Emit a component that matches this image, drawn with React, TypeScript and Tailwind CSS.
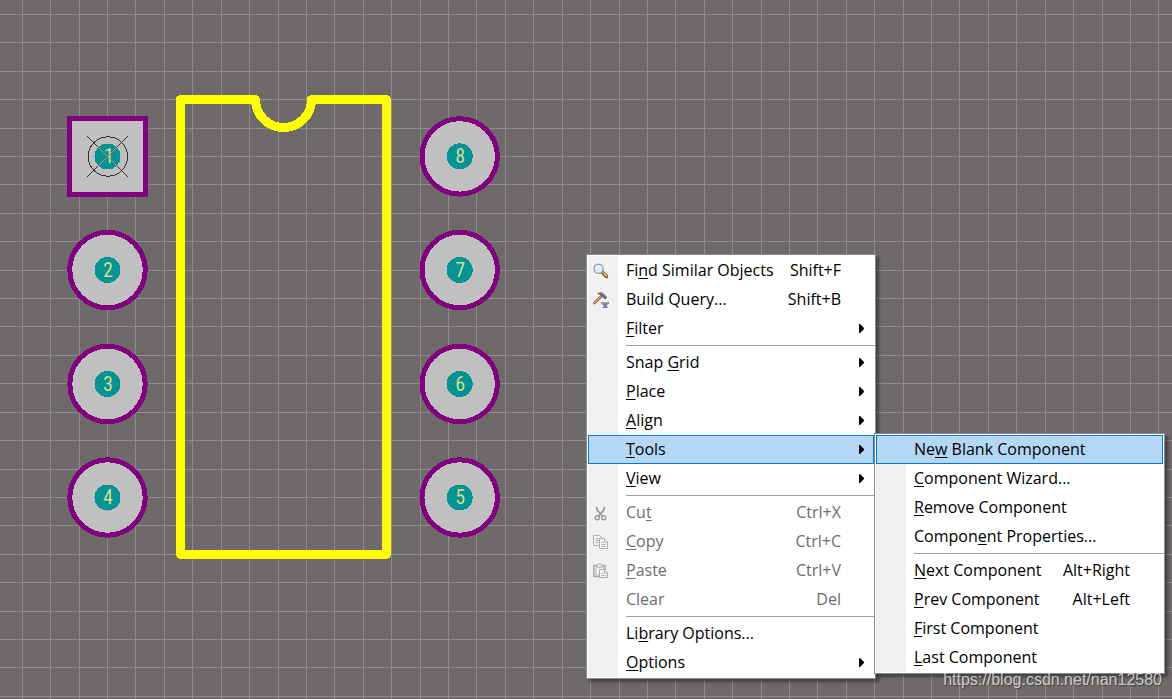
import type { ReactNode } from "react";
import clsx from "clsx";

type Item = {
  label: string;
  hotkey?: number;
  shortcut?: string;
  icon?: ReactNode;
  disabled?: boolean;
  active?: boolean;
  submenu?: boolean;
  children?: Entry[];
};

type Entry = Item | "separator";

const GRID = 28.415;

const columns = Array.from({ length: 100 }, (_, i) => Math.floor(22.3 + i * GRID));
const rows = Array.from({ length: 60 }, (_, i) => Math.floor(14.4 + i * GRID));

const pads = [
  { pin: 2, x: 107.5, y: 270 },
  { pin: 3, x: 107.5, y: 384 },
  { pin: 4, x: 107.5, y: 497.5 },
  { pin: 5, x: 459.7, y: 497.5 },
  { pin: 6, x: 459.7, y: 384 },
  { pin: 7, x: 459.7, y: 270 },
  { pin: 8, x: 459.7, y: 156.4 },
];

const SearchIcon = () => (
  <svg width="16" height="16" viewBox="0 0 16 16" aria-hidden="true">
    <path d="M9.5 9.5 13.5 13.5" stroke="#6b4a2c" strokeWidth="3.4" strokeLinecap="round" />
    <path d="M10 9.6 13.4 13" stroke="#f0b04a" strokeWidth="1.8" strokeLinecap="round" />
    <circle cx="5.6" cy="5.8" r="4.6" fill="#d9ecfb" stroke="#8d93a3" strokeWidth="1.2" />
    <path d="M3 6a3 3 0 0 1 3-3" stroke="#fff" strokeWidth="1.6" fill="none" />
  </svg>
);

const HammerIcon = () => (
  <svg width="16" height="16" viewBox="0 0 16 16" aria-hidden="true">
    <path d="M1.5 11 8 4.5" stroke="#8f5a34" strokeWidth="2.6" strokeLinecap="round" />
    <path d="M1.5 10.7 7.6 4.6" stroke="#e8a870" strokeWidth="1.3" strokeLinecap="round" />
    <path d="M4.5 1C7-.1 9.3.1 10.6 1.400l3.600 3.800-1.600 2-1.800-.4-.6-1.400L8.400 4.200 7 3 4.500 1.800z" fill="#606468" />
    <path d="M6 1.100c1.800-.4 3.200 0 4 .9l2.600 2.800" stroke="#a3a7ab" strokeWidth=".8" fill="none" />
    <path d="M7.500 10H16v1.500l-2 1.500v1.500l1.500 1.500H9l1.500-1.500V13l-2-.8z" fill="#7d8296" />
    <path d="M8.500 10.800h6.500" stroke="#b3b8c9" strokeWidth=".8" />
  </svg>
);

const CutIcon = () => (
  <svg width="16" height="16" viewBox="0 0 16 16" fill="none" stroke="#999" aria-hidden="true">
    <path d="M3.500 2 4.500 5.500l5 5.500M11.500 2l-1 3.500-5 5.500" strokeWidth="1.800" />
    <circle cx="4.300" cy="12.700" r="2" strokeWidth="1.400" />
    <circle cx="10.700" cy="12.700" r="2" strokeWidth="1.400" />
  </svg>
);

const CopyIcon = () => (
  <svg width="16" height="16" viewBox="0 0 16 16" fill="#f4f4f4" stroke="#b0b0b0" aria-hidden="true">
    <path d="M.5 1.500h6l3 3v7h-9z" />
    <path d="M2.500 4.500h3M2.500 6.500h4M2.500 8.500h4" />
    <path d="M6.500 4.500h5l3 3.500v6.500h-8z" />
    <path d="M11.500 4.500V8H15M8.500 8.500h2M8.500 10.500h4M8.500 12.500h4" />
  </svg>
);

const PasteIcon = () => (
  <svg width="16" height="16" viewBox="0 0 16 16" fill="#f4f4f4" stroke="#aaa" aria-hidden="true">
    <path d="M.7 2.500h11.500v11H.7z" fill="#dcdcdc" strokeWidth="1.400" />
    <path d="M3 4h7.500v8H3z" stroke="#c4c4c4" />
    <path d="M4 4V2.500l1-1.500h3l1 1.500V4z" />
    <path d="M6.500 6.500h5l3 3v5h-8z" />
    <path d="M11.500 6.500V10H15M8.500 10.500h2M8.500 12.500h4" />
  </svg>
);

const toolsMenu: Entry[] = [
  { label: "New Blank Component", hotkey: 2, active: true },
  { label: "Component Wizard...", hotkey: 0 },
  { label: "Remove Component", hotkey: 0 },
  { label: "Component Properties...", hotkey: 6 },
  "separator",
  { label: "Next Component", hotkey: 0, shortcut: "Alt+Right" },
  { label: "Prev Component", hotkey: 0, shortcut: "Alt+Left" },
  { label: "First Component", hotkey: 0 },
  { label: "Last Component", hotkey: 0 },
];

const contextMenu: Entry[] = [
  { label: "Find Similar Objects", hotkey: 2, shortcut: "Shift+F", icon: <SearchIcon /> },
  { label: "Build Query...", shortcut: "Shift+B", icon: <HammerIcon /> },
  { label: "Filter", hotkey: 0, submenu: true },
  "separator",
  { label: "Snap Grid", hotkey: 5, submenu: true },
  { label: "Place", hotkey: 0, submenu: true },
  { label: "Align", hotkey: 0, submenu: true },
  { label: "Tools", hotkey: 0, submenu: true, active: true, children: toolsMenu },
  { label: "View", hotkey: 0, submenu: true },
  "separator",
  { label: "Cut", hotkey: 2, shortcut: "Ctrl+X", disabled: true, icon: <CutIcon /> },
  { label: "Copy", hotkey: 0, shortcut: "Ctrl+C", disabled: true, icon: <CopyIcon /> },
  { label: "Paste", hotkey: 0, shortcut: "Ctrl+V", disabled: true, icon: <PasteIcon /> },
  { label: "Clear", shortcut: "Del", disabled: true },
  "separator",
  { label: "Library Options...", hotkey: 2 },
  { label: "Options", hotkey: 0, submenu: true },
];

function Label({ text, hotkey }: { text: string; hotkey?: number }) {
  if (hotkey === undefined) return <span className="pb-0.5">{text}</span>;
  return (
    <span className="pb-0.5">
      {text.slice(0, hotkey)}
      <u className="decoration-1 underline-offset-2 [text-decoration-skip-ink:none]">{text[hotkey]}</u>
      {text.slice(hotkey + 1)}
    </span>
  );
}

function Menu({ entries, className }: { entries: Entry[]; className?: string }) {
  return (
    <div
      className={clsx(
        "absolute border border-[#8c8c8c] bg-white p-px shadow-[3px_3px_3px_rgba(0,0,0,0.4)]",
        className
      )}
    >
      <ul role="menu" className="bg-[linear-gradient(to_right,#f1f1f1_30px,#ffffff_30px)]">
        {entries.map((entry, i) =>
          entry === "separator" ? (
            <li key={i} role="separator" className="-mr-px ml-[38px] h-[5px] pt-0.5">
              <div className="h-px bg-[#a0a0a0]" />
            </li>
          ) : (
            <li key={i} role="none" className="relative">
              <button
                type="button"
                role="menuitem"
                disabled={entry.disabled}
                aria-haspopup={entry.submenu ? "menu" : undefined}
                className={clsx(
                  "flex h-[29px] w-full items-center pl-[5px] text-left whitespace-nowrap",
                  entry.disabled ? "text-[#6d6d6d]" : "text-black",
                  entry.active && "bg-[#b3d7f5] ring-1 ring-[#0078d7] ring-inset"
                )}
              >
                <span className="mr-[17px] w-4 shrink-0">{entry.icon}</span>
                <Label text={entry.label} hotkey={entry.hotkey} />
                {entry.shortcut && <span className="mr-[33px] ml-auto pb-0.5">{entry.shortcut}</span>}
                {entry.submenu && (
                  <svg width="5" height="9" className="mr-2.5 ml-auto" aria-hidden="true">
                    <path d="M0 0h1l4 4v1L1 9H0z" />
                  </svg>
                )}
              </button>
              {entry.children && (
                <Menu entries={entry.children} className="-top-0.5 left-full w-[291px]" />
              )}
            </li>
          )
        )}
      </ul>
    </div>
  );
}

function Footprint() {
  return (
    <svg className="absolute inset-0 h-full w-full" role="img" aria-label="DIP-8 footprint">
      <g stroke="#8e8a90" shapeRendering="crispEdges">
        {columns.map((x) => (
          <line key={x} x1={x + 0.5} x2={x + 0.5} y1="0" y2="100%" />
        ))}
        {rows.map((y) => (
          <line key={y} x1="0" x2="100%" y1={y + 0.5} y2={y + 0.5} />
        ))}
      </g>

      {/* Body outline with the pin 1 notch */}
      <path
        d="M255.500 99.500H180.500V554.500H386.500V99.500H311.500A28 28 0 0 1 255.500 99.500"
        fill="none"
        stroke="#ffff00"
        strokeWidth="9"
        strokeLinejoin="round"
        strokeLinecap="round"
        shapeRendering="crispEdges"
      />

      <g
        textAnchor="middle"
        className="text-[20px]"
        fontFamily="'Liberation Sans Narrow', 'Roboto Condensed', 'Liberation Sans', sans-serif"
      >
        {/* Pin 1 is square and carries the origin marker */}
        <rect x="69.500" y="118.500" width="76" height="76" fill="#c0c0c0" stroke="#800080" strokeWidth="5" />
        <circle cx="107.500" cy="156.500" r="13" fill="#009494" shapeRendering="crispEdges" />
        <text x="109" y="163" fill="#dcd88c">1</text>
        <circle cx="107.900" cy="156.500" r="19.700" fill="none" stroke="#303030" shapeRendering="crispEdges" />
        <path d="M87 136l41 41M128 136l-41 41" stroke="#303030" shapeRendering="crispEdges" />
        <path d="M98 147l19 19M117 147l-19 19" stroke="#d08078" shapeRendering="crispEdges" />

        {pads.map((p) => (
          <g key={p.pin}>
            <circle
              cx={p.x}
              cy={p.y}
              r="37.700"
              fill="#c0c0c0"
              stroke="#800080"
              strokeWidth="5"
              shapeRendering="crispEdges"
            />
            <circle cx={p.x} cy={p.y} r="13" fill="#009494" shapeRendering="crispEdges" />
            <text x={p.x + 0.5} y={Math.floor(p.y) + 7} fill="#dcd88c">
              {p.pin}
            </text>
          </g>
        ))}
      </g>
    </svg>
  );
}

export default function App() {
  return (
    <main className="relative min-h-screen overflow-hidden bg-[#6e6a69] font-['Open_Sans','Noto_Sans',sans-serif] text-base">
      <Footprint />
      <Menu entries={contextMenu} className="top-[254px] left-[586px] w-[290px]" />
      <a
        href="https://blog.csdn.net/nan12580"
        className="absolute right-2.5 bottom-[7px] font-['Liberation_Sans',sans-serif] text-base text-white/70 [text-shadow:1px_1px_1px_rgba(0,0,0,0.4)]"
      >
        https://blog.csdn.net/nan12580
      </a>
    </main>
  );
}
